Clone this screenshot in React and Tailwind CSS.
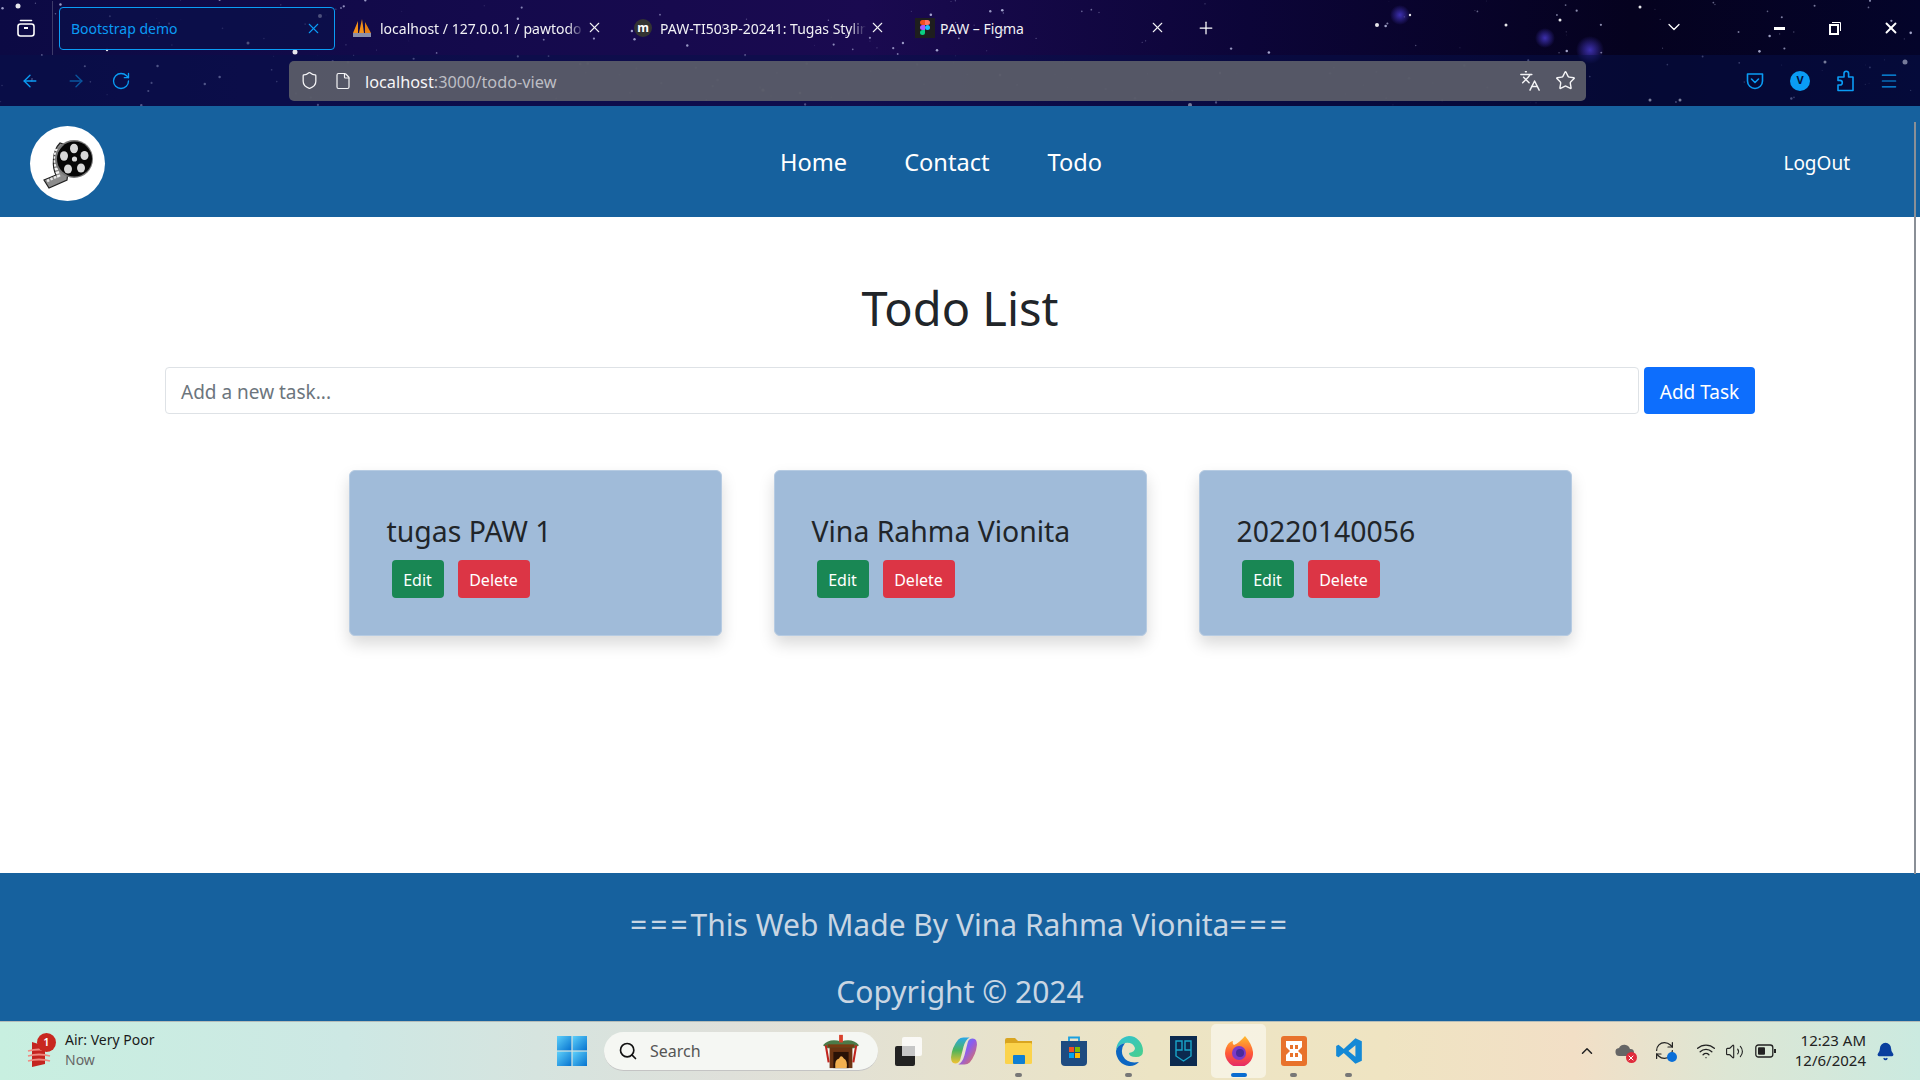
import { ArrowLeft, ArrowRight, Bell, ChevronDown, ChevronUp, File, Languages, Menu, Plus, RefreshCw, RotateCw, Search, Shield, Star, Volume2, Wifi, X } from 'lucide-react'

// deterministic star field for the browser theme
const STARS = Array.from({ length: 230 }, (_, i) => {
  const a = Math.sin(i * 12.9898) * 43758.5453
  const b = Math.sin(i * 78.233) * 12543.1234
  const c = Math.sin(i * 39.425) * 24634.6345
  return {
    x: (a - Math.floor(a)) * 1920,
    y: (b - Math.floor(b)) * 106,
    r: 0.4 + (c - Math.floor(c)) * 0.9,
    o: 0.15 + (c - Math.floor(c)) * 0.6,
  }
})

const BRIGHT = [
  [18, 6, 2.5], [320, 16, 2], [295, 52, 2.5], [248, 43, 1.5], [107, 50, 1.2], [1377, 25, 2], [1506, 25, 1.5], [1560, 20, 1.5],
  [1640, 7, 1.5], [1825, 62, 1.5], [1680, 100, 1.5], [1650, 100, 1.5], [1905, 62, 2.5], [1410, 15, 1.2], [1190, 105, 2],
  [763, 90, 1.6], [800, 93, 1.2], [1000, 75, 1.2], [1220, 73, 1.2],
]

function Starfield() {
  return (
    <svg className="absolute inset-0 w-full h-full pointer-events-none" viewBox="0 0 1920 106" preserveAspectRatio="none">
      <defs>
        <radialGradient id="neb" cx="50%" cy="50%" r="50%">
          <stop offset="0%" stopColor="#4a3bd0" stopOpacity="0.8" />
          <stop offset="100%" stopColor="#4a3bd0" stopOpacity="0" />
        </radialGradient>
      </defs>
      <circle cx="1400" cy="15" r="10" fill="url(#neb)" />
      <circle cx="1590" cy="50" r="14" fill="url(#neb)" />
      <circle cx="1545" cy="38" r="10" fill="url(#neb)" />
      {STARS.map((s, i) => (
        <circle key={i} cx={s.x} cy={s.y} r={s.r} fill="#d8dcff" opacity={s.o} />
      ))}
      {BRIGHT.map(([x, y, r], i) => (
        <circle key={i} cx={x} cy={y} r={r} fill="#ffffff" opacity="0.9" />
      ))}
    </svg>
  )
}

function Tab({ width, icon, title, active, fade, closeClass }) {
  return (
    <div className={`relative flex items-center h-[43px] shrink-0 ${width} ${active ? 'border border-[#0a9cf5] rounded-[4px] bg-[#0a0f4a]/70 pl-[11px] text-[#0a9cf5]' : 'text-[#f2f2f5]'}`}>
      {icon}
      <span className={`whitespace-nowrap text-[14px] ${fade}`}>{title}</span>
      <X className={`absolute top-[12px] ${closeClass}`} size={17} strokeWidth={1.5} />
    </div>
  )
}

function PmaIcon() {
  return (
    <svg className="absolute left-[6px] top-[11px]" width="20" height="20" viewBox="0 0 20 20">
      <path d="M1 15 L6 3 L6 15Z" fill="#f39019" />
      <path d="M7 15 L10 1 L12 15Z" fill="#f39019" />
      <path d="M13 4 L19 15 L13 15Z" fill="#e67e12" />
      <rect x="1" y="15" width="18" height="4" fill="#8b8fa8" />
    </svg>
  )
}

function MoodleIcon() {
  return (
    <div className="absolute left-[-12px] top-[12px] flex w-[18px] h-[18px] items-center justify-center rounded-full bg-[#333] text-[12px] font-bold text-white">
      m
    </div>
  )
}

function FigmaIcon() {
  return (
    <div className="absolute left-[-17px] top-[11px] flex w-[20px] h-[20px] items-center justify-center bg-[#1e1e1e]">
      <svg width="10" height="15" viewBox="0 0 10 15">
        <path d="M2.5 0H5v5H2.5a2.5 2.5 0 0 1 0-5Z" fill="#f24e1e" />
        <path d="M5 0h2.5a2.5 2.5 0 0 1 0 5H5Z" fill="#ff7262" />
        <path d="M2.5 5H5v5H2.5a2.5 2.5 0 0 1 0-5Z" fill="#a259ff" />
        <circle cx="7.5" cy="7.5" r="2.5" fill="#1abcfe" />
        <path d="M2.5 10H5v2.5a2.5 2.5 0 1 1-2.5-2.5Z" fill="#0acf83" />
      </svg>
    </div>
  )
}

function RestoreIcon() {
  return (
    <svg width="14" height="14" viewBox="0 0 14 14" fill="none">
      <path d="M4 1.5h8.5V10" stroke="#fff" strokeWidth="1" />
      <rect x="2" y="4" width="8" height="9" stroke="#fff" strokeWidth="2" />
    </svg>
  )
}

function TabBar() {
  return (
    <div className="relative flex items-center h-[55px] pt-[1px]">
      <div className="flex w-[53px] h-full items-center justify-center border-r border-white/20 shrink-0">
        <svg width="20" height="20" viewBox="0 0 20 20" fill="none" stroke="#fff" strokeWidth="1.6">
          <rect x="2" y="6" width="16" height="12" rx="2.5" />
          <path d="M4.5 2.5h11" strokeLinecap="round" />
          <path d="M8 10h4" strokeWidth="2" />
        </svg>
      </div>
      <div className="ml-[6px] flex items-center">
        <Tab width="w-[276px]" title="Bootstrap demo" active fade="text-[14.4px]" closeClass="left-[245px]" />
        <div className="ml-[11px]">
          <Tab
            width="w-[300px] pl-[34px]"
            icon={<PmaIcon />}
            title={<span className="inline-block w-[204px] overflow-hidden align-bottom [mask-image:linear-gradient(90deg,#000_92%,transparent)]">localhost / 127.0.0.1 / pawtodo</span>}
            closeClass="left-[240px]"
          />
        </div>
        <Tab
          width="w-[286px] pl-[14px]"
          icon={<MoodleIcon />}
          title={<span className="inline-block w-[206px] overflow-hidden align-bottom [mask-image:linear-gradient(90deg,#000_92%,transparent)]">PAW-TI503P-20241: Tugas Styling</span>}
          closeClass="left-[223px]"
        />
        <Tab width="w-[282px] pl-[8px]" icon={<FigmaIcon />} title="PAW – Figma" closeClass="left-[217px]" />
        <Plus className="ml-[-18px] text-white" size={20} strokeWidth={1.5} />
      </div>
      <ChevronDown className="absolute left-[1664px] top-[17px] text-white" size={20} strokeWidth={1.5} />
      <div className="ml-auto flex items-center pr-[1px]">
        <div className="w-[56px] flex justify-center"><div className="w-[11px] h-[3px] bg-white" /></div>
        <div className="w-[56px] flex justify-center"><RestoreIcon /></div>
        <div className="w-[56px] flex justify-center"><X className="text-white" size={18} strokeWidth={2.5} /></div>
      </div>
    </div>
  )
}

function ToolBar() {
  return (
    <div className="relative flex items-center h-[51px] bg-[#05104a]/50">
      <div className="flex items-center w-[289px] pl-[20px] text-[#0a9cf5]">
        <ArrowLeft size={20} strokeWidth={1.6} />
        <ArrowRight className="ml-[26px] opacity-50" size={20} strokeWidth={1.6} />
        <RotateCw className="ml-[25px]" size={20} strokeWidth={1.6} />
      </div>
      <div className="relative flex items-center w-[1297px] h-[40px] rounded-[5px] bg-[#5a5c68]/95 pl-[11px]">
        <Shield className="text-[#f4f4f6]" size={19} strokeWidth={1.6} />
        <File className="ml-[15px] text-[#f4f4f6]" size={18} strokeWidth={1.6} />
        <span className="ml-[13px] mt-[3px] text-[16.3px] text-[#f5f5f7]">
          localhost<span className="text-[#bdbec4]">:3000/todo-view</span>
        </span>
        <Languages className="ml-auto text-[#f4f4f6]" size={22} strokeWidth={1.6} />
        <Star className="ml-[14px] mr-[10px] text-[#f4f4f6]" size={21} strokeWidth={1.6} />
      </div>
      <div className="flex items-center ml-[159px] text-[#0a9cf5]">
        <svg width="20" height="20" viewBox="0 0 20 20" fill="none" stroke="currentColor" strokeWidth="1.6">
          <path d="M2.5 3h15v7a7.5 7.5 0 0 1-15 0Z" strokeLinejoin="round" />
          <path d="M6.5 8 10 11.5 13.5 8" strokeLinecap="round" strokeLinejoin="round" />
        </svg>
        <div className="ml-[25px] flex w-[20px] h-[20px] items-center justify-center rounded-full bg-[#0a9cf5] text-[11px] font-bold text-[#04103c]">V</div>
        <svg className="ml-[25px]" width="20" height="22" viewBox="0 0 20 22" fill="none" stroke="currentColor" strokeWidth="1.6" strokeLinejoin="round">
          <path d="M9 7V3.5a2.3 2.3 0 0 1 4.6 0V7H18v13.5H3V15h2a2.3 2.3 0 0 0 0-4.6H3V7Z" />
        </svg>
        <Menu className="ml-[24px]" size={20} strokeWidth={1.4} />
      </div>
    </div>
  )
}

function FilmLogo() {
  return (
    <svg width="50" height="50" viewBox="0 0 50 50">
      {/* film strip curling out from behind the reel */}
      <path d="M17 4 C9 12 9 28 13 36 L1 41 L6 49 L24 41 L28 8Z" fill="#8c8c8c" stroke="#222" strokeWidth="1.2" />
      <path d="M14 10 C11 18 12 28 16 38" stroke="#f2f2f2" strokeWidth="3.4" strokeDasharray="2.4 1.4" fill="none" />
      <path d="M4 42 L15 37" stroke="#e8e8e8" strokeWidth="2.6" strokeDasharray="2.4 1.4" />
      <circle cx="31" cy="20" r="19" fill="#777" />
      <circle cx="31.5" cy="20" r="17.5" fill="#060606" />
      <circle cx="31.5" cy="20" r="2.6" fill="#d8d8d8" />
      <ellipse cx="31" cy="9.5" rx="4" ry="4.8" fill="#d8d8d8" />
      <ellipse cx="41.5" cy="16.5" rx="4" ry="4.5" fill="#d8d8d8" />
      <ellipse cx="38" cy="29" rx="4" ry="4.5" fill="#d8d8d8" />
      <ellipse cx="25" cy="30" rx="4" ry="4.5" fill="#d8d8d8" />
      <ellipse cx="21" cy="17" rx="4" ry="4.8" fill="#d8d8d8" />
    </svg>
  )
}

function NavBar() {
  return (
    <nav className="flex items-center h-[111px] bg-[#16619e] pt-[3px] text-white">
      <div className="ml-[30px] mt-[1px] flex w-[75px] h-[75px] items-center justify-center rounded-full bg-white">
        <FilmLogo />
      </div>
      <div className="ml-[675px] flex items-center gap-[57px] text-[23.6px]">
        <a>Home</a>
        <a>Contact</a>
        <a className="ml-[1px]">Todo</a>
      </div>
      <a className="ml-auto mr-[70px] text-[19px]">LogOut</a>
    </nav>
  )
}

function TodoCard({ title }) {
  return (
    <div className="w-[373px] h-[166px] rounded-[6px] border border-[#b6cbe2] bg-[#a0bbd9] pt-[38px] pl-[37px] shadow-[0_8px_16px_rgba(0,0,0,0.15)]">
      <h3 className="text-[28.4px] leading-[44px] text-[#212529]">{title}</h3>
      <div className="mt-[7px] ml-[5px] flex gap-[14px]">
        <button className="h-[38px] w-[52px] rounded-[4px] bg-[#198754] pt-[1px] text-[16px] text-white">Edit</button>
        <button className="h-[38px] w-[72px] rounded-[4px] bg-[#dc3545] pt-[1px] text-[16px] text-white">Delete</button>
      </div>
    </div>
  )
}

function Main() {
  return (
    <main className="flex-1 bg-white">
      <h1 className="mt-[58px] text-center text-[47px] leading-[66px] text-[#212529]">Todo List</h1>
      <div className="mt-[26px] ml-[165px] mr-[165px] flex gap-[5px]">
        <div className="flex flex-1 h-[47px] items-center rounded-[4px] border border-[#dee2e6] pl-[15px] pt-[3px] text-[19px] text-[#6c757d]">Add a new task...</div>
        <button className="h-[47px] w-[111px] rounded-[4px] bg-[#0d6efd] pt-[3px] text-[19px] text-white">Add Task</button>
      </div>
      <div className="mt-[56px] flex justify-center gap-[52px]">
        <TodoCard title="tugas PAW 1" />
        <TodoCard title="Vina Rahma Vionita" />
        <TodoCard title="20220140056" />
      </div>
    </main>
  )
}

function Footer() {
  return (
    <footer className="h-[148px] bg-[#16619e] pt-[30px] text-center text-[30px] leading-[44px] text-[#c9d6e3]">
      <p>
        <span className="tracking-[3px]">===</span>This Web Made By Vina Rahma Vionita<span className="tracking-[3px]">===</span>
      </p>
      <p className="mt-[23px]">Copyright © 2024</p>
    </footer>
  )
}

function TaskIcon({ children, dot, active }) {
  return (
    <div className={`relative flex w-[55px] h-[54px] items-center justify-center rounded-[5px] ${active ? 'bg-white/50' : ''}`}>
      {children}
      {dot && <div className="absolute bottom-[1px] w-[7px] h-[4px] rounded-full bg-[#777]" />}
      {active && <div className="absolute bottom-[1px] w-[16px] h-[4px] rounded-full bg-[#0a6cd0]" />}
    </div>
  )
}

function Taskbar() {
  return (
    <div className="relative flex items-center h-[59px] border-t border-[#b5bdb9] bg-[linear-gradient(90deg,#c8efe0_0%,#cde8e4_18%,#dfe0da_38%,#ece4c4_60%,#efe4c2_72%,#f2dfc6_82%,#dde6d4_90%,#cbeae0_100%)] text-[#1a1a1a]">
      <div className="relative ml-[27px] w-[28px] h-[34px]">
        <svg width="24" height="32" viewBox="0 0 24 32" className="absolute top-[4px]">
          <path d="M5 4 L18 8 V26 L5 29Z" fill="#c4241f" />
          <path d="M1 13 Q12 10 23 13M1 18 Q12 15 23 18M1 23 Q12 20 23 23" stroke="#f08a80" strokeWidth="1.8" fill="none" />
        </svg>
        <div className="absolute left-[10px] top-[-1px] flex w-[19px] h-[19px] items-center justify-center rounded-full bg-[#c8271f] text-[11px] font-semibold text-white">1</div>
      </div>
      <div className="ml-[10px] mt-[-2px] flex flex-col leading-[20px] text-[14px]">
        <span>Air: Very Poor</span>
        <span className="text-[#666]">Now</span>
      </div>

      <div className="absolute left-[557px] top-[0px] flex items-center h-full">
        <svg width="30" height="30" viewBox="0 0 30 30">
          <defs>
            <linearGradient id="win" x1="0" y1="0" x2="1" y2="1">
              <stop offset="0%" stopColor="#5ed0fa" />
              <stop offset="100%" stopColor="#0673d0" />
            </linearGradient>
          </defs>
          <rect x="0" y="0" width="14.4" height="14.4" fill="url(#win)" />
          <rect x="15.6" y="0" width="14.4" height="14.4" fill="url(#win)" />
          <rect x="0" y="15.6" width="14.4" height="14.4" fill="url(#win)" />
          <rect x="15.6" y="15.6" width="14.4" height="14.4" fill="url(#win)" />
        </svg>
        <div className="ml-[17px] flex items-center w-[274px] h-[39px] rounded-full border-b border-[#c4c4c4] bg-[#f5f7f3] pl-[14px] pr-[18px]">
          <Search size={20} strokeWidth={2} className="text-[#111]" />
          <span className="ml-[12px] text-[16px] text-[#555]">Search</span>
          <svg className="ml-auto" width="38" height="36" viewBox="0 0 40 36">
            <path d="M1 12 Q8 4 20 8 Q32 4 39 12 L34 15 H6Z" fill="#4b7a48" />
            <rect x="18" y="1" width="4" height="8" fill="#d9412c" />
            <rect x="6" y="11" width="28" height="3" fill="#7a3b12" />
            <rect x="8" y="14" width="24" height="22" fill="#6b3412" />
            <rect x="12" y="19" width="16" height="17" fill="#2a1206" />
            <path d="M14 36 Q13 27 18 26 Q20 21 23 26 Q27 28 26 36Z" fill="#f2b050" />
            <path d="M4 12 L7 30M36 12 L33 30" stroke="#c0251d" strokeWidth="2.2" />
          </svg>
        </div>
        <div className="ml-[3px] flex items-center">
          <TaskIcon>
            <div className="relative w-[27px] h-[29px]">
              <div className="absolute right-0 top-0 w-[20px] h-[19px] rounded-[2px] bg-white/80" />
              <div className="absolute left-0 bottom-0 w-[20px] h-[20px] rounded-[2px] bg-[#222]" />
              <div className="absolute left-[7px] top-[9px] w-[13px] h-[10px] bg-[#c6c6c6]" />
            </div>
          </TaskIcon>
          <TaskIcon>
            <svg width="28" height="30" viewBox="0 0 27 28">
              <defs>
                <linearGradient id="cop" x1="0" y1="0" x2="1" y2="1">
                  <stop offset="0%" stopColor="#2aa7e8" />
                  <stop offset="45%" stopColor="#8a5cf0" />
                  <stop offset="100%" stopColor="#f0743c" />
                </linearGradient>
                <linearGradient id="cop2" x1="0" y1="0" x2="0" y2="1">
                  <stop offset="0%" stopColor="#2aa7e8" />
                  <stop offset="50%" stopColor="#4fb45a" />
                  <stop offset="100%" stopColor="#f2c230" />
                </linearGradient>
              </defs>
              <path d="M8 3 Q10 1 13 1 H19 Q15 3 13 10 L10 22 Q9 26 5 26 Q1 26 1 20 Q2 10 8 3Z" fill="url(#cop2)" />
              <path d="M19 25 Q17 27 14 27 H8 Q12 25 14 18 L17 6 Q18 2 22 2 Q26 2 26 8 Q25 18 19 25Z" fill="url(#cop)" />
            </svg>
          </TaskIcon>
          <TaskIcon dot>
            <svg width="27" height="26" viewBox="0 0 27 26">
              <path d="M0 2 Q0 0 2 0 H10 L13 3 H27 V7 H0Z" fill="#d9a520" />
              <rect x="0" y="5" width="27" height="21" rx="1.5" fill="#fbd34c" />
              <rect x="8" y="17" width="12" height="9" rx="1" fill="#0f7fd2" />
            </svg>
          </TaskIcon>
          <TaskIcon>
            <svg width="26" height="30" viewBox="0 0 26 30">
              <path d="M8 5 V1.5 H18 V5" fill="none" stroke="#1aa0e0" strokeWidth="1.8" />
              <path d="M0 5 H26 V26 Q26 30 22 30 H4 Q0 30 0 26Z" fill="#1e4b80" />
              <rect x="8" y="11" width="5" height="5" fill="#f25022" />
              <rect x="14" y="11" width="5" height="5" fill="#7fba00" />
              <rect x="8" y="17" width="5" height="5" fill="#00a4ef" />
              <rect x="14" y="17" width="5" height="5" fill="#ffb900" />
            </svg>
          </TaskIcon>
          <TaskIcon dot>
            <svg width="28" height="30" viewBox="0 0 28 30">
              <defs>
                <linearGradient id="edge" x1="0" y1="0" x2="1" y2="1">
                  <stop offset="0%" stopColor="#2fc0d6" />
                  <stop offset="100%" stopColor="#49d08a" />
                </linearGradient>
              </defs>
              <path d="M14 0 A14 15 0 0 1 28 15 Q28 21 21 21 Q14 21 14 17 Q20 16 20 12 Q18 6 10 7 Q2 9 1 15 A14 15 0 0 1 14 0Z" fill="url(#edge)" />
              <path d="M1 15 Q2 9 10 7 Q5 13 8 20 Q12 28 24 26 A14 15 0 0 1 14 30 A14 15 0 0 1 1 15Z" fill="#0c66c2" />
            </svg>
          </TaskIcon>
          <TaskIcon>
            <div className="flex w-[27px] h-[30px] items-center justify-center bg-[#0c2a4f]">
              <svg width="19" height="24" viewBox="0 0 19 24" fill="none" stroke="#19a5c9" strokeWidth="1.4">
                <path d="M2 2h6v9H2ZM11 2h6v9h-6ZM2 11v6l7.5 5 7.5-5v-6" />
              </svg>
            </div>
          </TaskIcon>
          <TaskIcon active>
            <svg width="28" height="30" viewBox="0 0 28 30">
              <defs>
                <linearGradient id="fx" x1="0.5" y1="0" x2="0.5" y2="1">
                  <stop offset="0%" stopColor="#ffbd2e" />
                  <stop offset="55%" stopColor="#ff5a36" />
                  <stop offset="100%" stopColor="#e3256b" />
                </linearGradient>
              </defs>
              <path d="M20 0 Q27 8 28 16 A14 14 0 1 1 1 12 Q3 6 8 5 Q7 8 9 9 Q14 7 20 0Z" fill="url(#fx)" />
              <circle cx="14" cy="17" r="7" fill="#7b3bc9" />
              <circle cx="15" cy="17" r="4" fill="#4a2a9c" />
            </svg>
          </TaskIcon>
          <TaskIcon dot>
            <svg width="26" height="30" viewBox="0 0 26 30">
              <rect width="26" height="30" rx="3" fill="#e8722c" />
              <path d="M5 5h16v6l-4 4 4 4v6H5v-6l4-4-4-4Z" fill="#fff" />
              <path d="M9 9h3v4H9ZM14 9h3v4h-3ZM9 17h3v4H9ZM14 17h3v4h-3Z" fill="#e8722c" />
            </svg>
          </TaskIcon>
          <TaskIcon dot>
            <svg width="28" height="28" viewBox="0 0 24 24">
              <path d="M17.5 1 23 3.6v16.8L17.5 23 7.5 13.8 3 17.3 1 16.2V7.8l2-1.1 4.5 3.5ZM17.5 7l-6 5 6 5Z" fill="#1489d6" />
            </svg>
          </TaskIcon>
        </div>
      </div>

      <div className="ml-auto flex items-center text-[#222]">
        <ChevronUp size={18} strokeWidth={2} />
        <div className="relative ml-[19px] w-[22px] h-[20px]">
          <svg width="20" height="14" viewBox="0 0 20 14" className="absolute top-[2px]"><path d="M5 13a4 4 0 0 1-1-8 6 6 0 0 1 11 1 3.5 3.5 0 0 1 1 7Z" fill="#666" /></svg>
          <div className="absolute right-[0px] bottom-[-2px] flex w-[11px] h-[11px] items-center justify-center rounded-full bg-[#e02b3c]">
            <X className="text-white" size={8} strokeWidth={3} />
          </div>
        </div>
        <div className="relative ml-[17px] w-[22px] h-[22px]">
          <RefreshCw size={21} strokeWidth={1.4} />
          <div className="absolute right-[-1px] bottom-[0px] w-[10px] h-[10px] rounded-full bg-[#0a6fd8]" />
        </div>
        <Wifi className="ml-[20px]" size={20} strokeWidth={1.6} />
        <Volume2 className="ml-[9px]" size={19} strokeWidth={1.4} />
        <svg className="ml-[11px]" width="21" height="14" viewBox="0 0 21 14" fill="none">
          <rect x="0.8" y="1" width="17" height="12" rx="2.5" stroke="#222" strokeWidth="1.3" />
          <rect x="3" y="3.2" width="7" height="7.6" rx="1" fill="#222" />
          <rect x="19" y="5" width="2" height="4" fill="#222" />
        </svg>
        <div className="ml-[19px] mt-[-3px] flex flex-col items-end text-[15px] leading-[20px]">
          <span>12:23 AM</span>
          <span>12/6/2024</span>
        </div>
        <Bell className="ml-[10px] mr-[25px] text-[#0a3f9e]" size={19} fill="#0a3f9e" />
      </div>
    </div>
  )
}

export default function App() {
  return (
    <div className="relative flex flex-col h-screen overflow-hidden font-['Noto_Sans',sans-serif]">
      <header className="relative h-[106px] bg-[linear-gradient(90deg,#0c0a44_0%,#140a4c_25%,#1a0a50_45%,#0c0538_65%,#05021f_85%,#04042a_100%)]">
        <Starfield />
        <div className="relative">
          <TabBar />
          <ToolBar />
        </div>
      </header>
      <NavBar />
      <Main />
      <Footer />
      <Taskbar />
      {/* page scrollbar */}
      <div className="absolute right-[4px] top-[122px] w-[2px] h-[752px] bg-[#8a8f96]" />
    </div>
  )
}
